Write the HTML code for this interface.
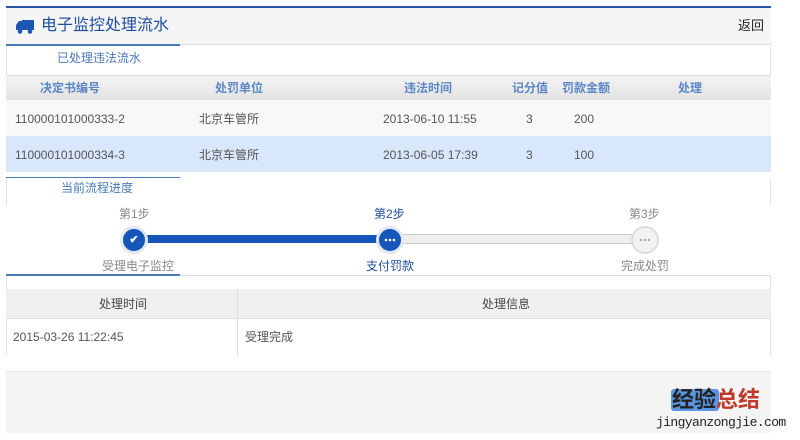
<!DOCTYPE html><html><head><meta charset="utf-8"><style>
body{margin:0;width:800px;height:440px;background:#fff;font-family:"Liberation Sans","Noto Sans CJK SC",sans-serif;position:relative;overflow:hidden;font-size:12px;line-height:14px;color:#444}
.a{position:absolute}
</style></head><body>
<div class="a" style="left:6px;top:6px;width:765px;height:2px;background:#2756a8"></div>
<div class="a" style="left:6px;top:8px;width:765px;height:37px;background:#f5f5f5;border-bottom:1px solid #ddd;box-sizing:border-box"></div>
<svg class="a" style="left:15px;top:19px" width="20" height="16" viewBox="0 0 20 16"><path d="M7 1h12v10H7z M1 6l3-4h4v9H1z" fill="#1e56b6"/><circle cx="5" cy="12.5" r="2.3" fill="#1e56b6"/><circle cx="15" cy="12.5" r="2.3" fill="#1e56b6"/></svg>
<div class="a" style="left:41px;top:17px;font-size:16px;line-height:18px;color:#1f4e9c">电子监控处理流水</div>
<div class="a" style="left:738px;top:19px;font-size:13px;color:#222">返回</div>
<div class="a" style="left:6px;top:44px;width:174px;height:2px;background:#4a79b8"></div>
<div class="a" style="left:6px;top:46px;width:765px;height:29px;border-left:1px solid #e2e2e2;border-right:1px solid #e2e2e2;box-sizing:border-box"></div>
<div class="a" style="left:57px;top:51px;color:#4a79b8">已处理违法流水</div>
<div class="a" style="left:6px;top:75px;width:765px;height:25px;background:linear-gradient(#f4f4f4,#e2e2e2);border-top:1px solid #ddd;box-sizing:border-box;color:#5b86c5;font-weight:bold">
<span class="a" style="left:34px;top:5px">决定书编号</span><span class="a" style="left:209px;top:5px">处罚单位</span><span class="a" style="left:398px;top:5px">违法时间</span><span class="a" style="left:506px;top:5px">记分值</span><span class="a" style="left:556px;top:5px">罚款金额</span><span class="a" style="left:672px;top:5px">处理</span></div>
<div class="a" style="left:6px;top:100px;width:765px;height:36px;background:#f8f8f8;color:#555">
<span class="a" style="left:9px;top:12px">110000101000333-2</span><span class="a" style="left:193px;top:12px">北京车管所</span><span class="a" style="left:377px;top:12px">2013-06-10 11:55</span><span class="a" style="left:520px;top:12px">3</span><span class="a" style="left:568px;top:12px">200</span></div>
<div class="a" style="left:6px;top:136px;width:765px;height:36px;background:#d8e7fb;color:#555">
<span class="a" style="left:9px;top:12px">110000101000334-3</span><span class="a" style="left:193px;top:12px">北京车管所</span><span class="a" style="left:377px;top:12px">2013-06-05 17:39</span><span class="a" style="left:520px;top:12px">3</span><span class="a" style="left:568px;top:12px">100</span></div>
<div class="a" style="left:6px;top:177px;width:174px;height:1px;background:#4a79b8"></div>
<div class="a" style="left:6px;top:178px;width:765px;height:28px;border-left:1px solid #e2e2e2;border-right:1px solid #e2e2e2;box-sizing:border-box"></div>
<div class="a" style="left:61px;top:181px;color:#4a79b8">当前流程进度</div>
<div class="a" style="left:119px;top:207px;color:#888">第1步</div>
<div class="a" style="left:374px;top:207px;color:#1f4e9c">第2步</div>
<div class="a" style="left:629px;top:207px;color:#888">第3步</div>
<div class="a" style="left:390px;top:234px;width:255px;height:10px;background:#eee;border:1px solid #ccc;box-sizing:border-box"></div>
<div class="a" style="left:134px;top:235px;width:256px;height:8px;background:#1556b8"></div>
<div class="a" style="left:120px;top:226px;width:28px;height:28px;border-radius:50%;background:#1556b8;border:3px solid #dfe8f4;box-sizing:border-box;color:#fff;text-align:center;line-height:22px;font-size:11px;font-weight:bold">✔</div>
<div class="a" style="left:376px;top:226px;width:28px;height:28px;border-radius:50%;background:#1556b8;border:3px solid #dfe8f4;box-sizing:border-box"><svg class="a" style="left:5px;top:9px" width="12" height="4"><circle cx="2" cy="2" r="1.3" fill="#fff"/><circle cx="6" cy="2" r="1.3" fill="#fff"/><circle cx="10" cy="2" r="1.3" fill="#fff"/></svg></div>
<div class="a" style="left:631px;top:226px;width:28px;height:28px;border-radius:50%;background:#f2f2f2;border:2px solid #ddd;box-sizing:border-box"><svg class="a" style="left:6px;top:10px" width="12" height="4"><circle cx="2" cy="2" r="1.2" fill="#aaa"/><circle cx="6" cy="2" r="1.2" fill="#aaa"/><circle cx="10" cy="2" r="1.2" fill="#aaa"/></svg></div>
<div class="a" style="left:102px;top:259px;color:#888">受理电子监控</div>
<div class="a" style="left:366px;top:259px;color:#1f4e9c">支付罚款</div>
<div class="a" style="left:621px;top:259px;color:#888">完成处罚</div>
<div class="a" style="left:6px;top:275px;width:765px;height:1px;background:#ddd"></div>
<div class="a" style="left:6px;top:274px;width:174px;height:2px;background:#4a79b8"></div>
<div class="a" style="left:6px;top:276px;width:765px;height:80px;border-left:1px solid #e2e2e2;border-right:1px solid #e2e2e2;box-sizing:border-box"></div>
<div class="a" style="left:6px;top:289px;width:765px;height:30px;background:#f0f0f0;border-bottom:1px solid #ddd;box-sizing:border-box"></div>
<div class="a" style="left:237px;top:289px;width:1px;height:67px;background:#ddd"></div>
<div class="a" style="left:99px;top:297px;color:#444">处理时间</div>
<div class="a" style="left:482px;top:297px;color:#444">处理信息</div>
<div class="a" style="left:13px;top:330px;color:#555">2015-03-26 11:22:45</div>
<div class="a" style="left:245px;top:330px;color:#555">受理完成</div>
<div class="a" style="left:6px;top:371px;width:765px;height:62px;background:#f4f4f4;border-top:1px solid #e4e4e4;box-sizing:border-box"></div>
<div class="a" style="left:671px;top:389px;width:48px;height:22px;background:#5b95e0;border-radius:3px"></div>
<div class="a" style="left:672px;top:387px;font-size:22px;line-height:26px;font-weight:bold;color:#222">经验<span style="color:#c0392b">总结</span></div>
<div class="a" style="left:656px;top:416px;font-size:13px;letter-spacing:-0.6px;font-family:'Liberation Mono',monospace;color:#222">jingyanzongjie.com</div>
</body></html>
